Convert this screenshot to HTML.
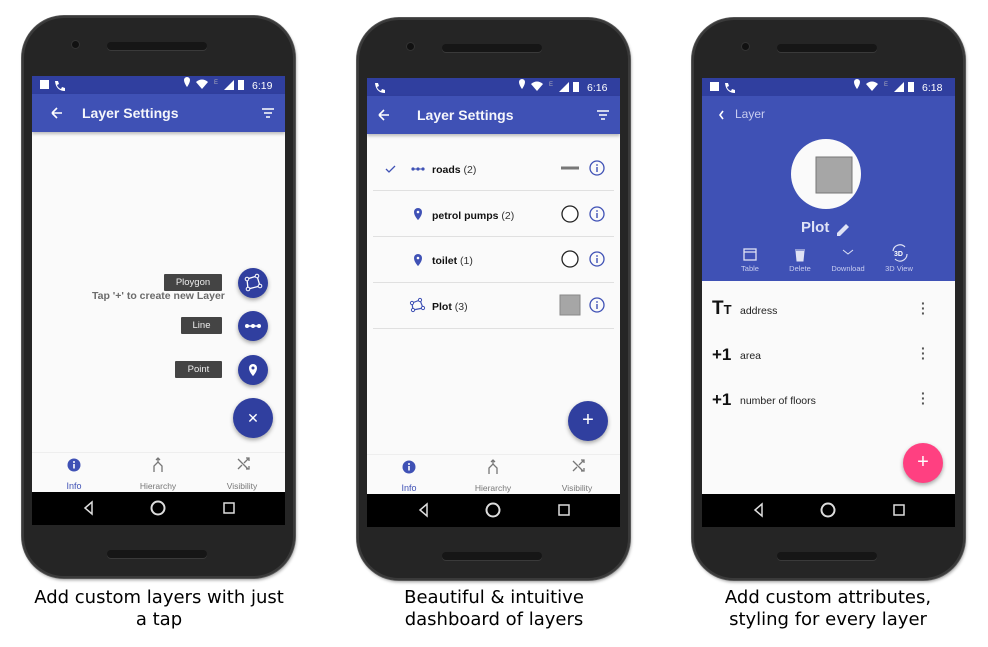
<!DOCTYPE html>
<html><head><meta charset="utf-8">
<style>
*{box-sizing:border-box;margin:0;padding:0}
body{width:988px;height:647px;background:#fff;position:relative;overflow:hidden;font-family:"Liberation Sans",sans-serif}
.phone{position:absolute;width:273px;height:562px;border-radius:42px;background:#252525;box-shadow:0 0 0 1px #555, inset 0 0 0 2px #3a3a3a, 1px 2px 3px rgba(0,0,0,.4)}
.spk{position:absolute;left:85px;width:100px;height:8px;border-radius:5px;background:#161616;box-shadow:0 1px 0 #3a3a3a}
.cam{position:absolute;left:50px;top:25px;width:7px;height:7px;border-radius:50%;background:#111;box-shadow:0 0 0 1px #333}
.scr{position:absolute;left:10px;top:60px;width:253px;height:449px;background:#fafafa;overflow:hidden}
.sb{position:absolute;left:0;top:0;width:253px;height:18px;background:#303f9f;color:#fff;font-size:10px}
.ab{position:absolute;left:0;top:18px;width:253px;height:38px;background:#3f51b5;color:#fff;box-shadow:0 2px 3px rgba(0,0,0,.25)}
.ab .t{position:absolute;left:50px;top:11px;font-size:14px;font-weight:bold;opacity:.95}
.nav{position:absolute;left:0;top:416px;width:253px;height:33px;background:#000}
.bn{position:absolute;left:0;top:376px;width:253px;height:40px;background:#fafafa;border-top:1px solid #eee}
.bn div{position:absolute;top:28px;font-size:8.5px;color:#777;width:60px;text-align:center}
.fab{position:absolute;border-radius:50%;background:#303f9f;box-shadow:0 2px 4px rgba(0,0,0,.35);color:#fff;text-align:center}
.lbl{position:absolute;background:#444;color:#eee;font-size:9.5px;height:17px;line-height:17px;text-align:center;border-radius:1px}
.row{position:absolute;left:0;width:253px;height:46px}
.row .n{position:absolute;left:65px;top:2px;line-height:46px;font-size:10.5px;font-weight:bold;color:#111}
.row .n span{font-weight:normal;color:#333}
.div{position:absolute;left:6px;width:241px;height:1px;background:#e0e0e0}
.cap{position:absolute;width:330px;text-align:center;font-family:"DejaVu Sans",sans-serif;font-size:18px;line-height:22px;color:#000;top:587px}
.ai div{position:absolute;top:186px;font-size:7.5px;color:#c8cdf0;width:50px;text-align:center}
.attr{position:absolute;left:0;width:253px}
.attr .ic{position:absolute;left:10px;font-size:17px;font-weight:bold;color:#111}
.attr .tx{position:absolute;left:38px;top:5px;font-size:10.5px;color:#222}
.attr .dt{position:absolute;left:219px;top:1px;font-size:14px;color:#555;font-weight:bold;line-height:5px;width:3px}
</style></head><body>

<!-- PHONE 1 -->
<div class="phone" style="left:22px;top:16px">
 <div class="cam"></div><div class="spk" style="top:26px"></div><div class="spk" style="top:534px"></div>
 <div class="scr">
  <div class="sb">
   <svg width="253" height="18" style="position:absolute;left:0;top:0">
    <rect x="8" y="4" width="9" height="9" fill="#fff"/><path d="M23 5l3 0 1 3-2 1q1 3 4 4l1-2 3 1v3q-9 0-10-10z" fill="#fff"/>
    <path d="M152 4a3 3 0 0 1 6 0c0 3-3 7-3 7s-3-4-3-7z" fill="#fff"/><path d="M164 6q6-5 12 0l-6 7z" fill="#fff"/>
    <text x="182" y="8" font-size="6" fill="#aab">E</text><path d="M192 14l10-10v10z" fill="#fff"/><rect x="206" y="4" width="6" height="10" fill="#fff"/>
    <text x="220" y="13" font-size="10.5" fill="#fff" font-family="Liberation Sans">6:19</text>
   </svg>
  </div>
  <div class="ab"><svg width="253" height="38" style="position:absolute"><path d="M20 19h10M20 19l5-5M20 19l5 5" stroke="#fff" stroke-width="1.6" fill="none"/><path d="M230 15h12M232 19h8M234 23h4" stroke="#fff" stroke-width="1.5"/></svg><div class="t">Layer Settings</div></div>
  <div style="position:absolute;left:60px;top:214px;font-size:10.5px;font-weight:bold;color:#6b6b6b">Tap '+' to create new Layer</div>
  <div class="lbl" style="left:132px;top:198px;width:58px">Ploygon</div>
  <div class="lbl" style="left:149px;top:241px;width:41px">Line</div>
  <div class="lbl" style="left:143px;top:285px;width:47px">Point</div>
  <div class="fab" style="left:206px;top:192px;width:30px;height:30px"><svg width="30" height="30"><path d="M9 11l10-3 3 10-12 3z" stroke="#fff" stroke-width="1.3" fill="none"/><circle cx="9" cy="11" r="1.8" fill="#303f9f" stroke="#fff"/><circle cx="19" cy="8" r="1.8" fill="#303f9f" stroke="#fff"/><circle cx="22" cy="18" r="1.8" fill="#303f9f" stroke="#fff"/><circle cx="10" cy="21" r="1.8" fill="#303f9f" stroke="#fff"/></svg></div>
  <div class="fab" style="left:206px;top:235px;width:30px;height:30px"><svg width="30" height="30"><path d="M8 15h14" stroke="#fff" stroke-width="1.5"/><circle cx="9" cy="15" r="2" fill="#fff"/><circle cx="15" cy="15" r="2" fill="#fff"/><circle cx="21" cy="15" r="2" fill="#fff"/></svg></div>
  <div class="fab" style="left:206px;top:279px;width:30px;height:30px"><svg width="30" height="30"><path d="M11 13a4 4 0 0 1 8 0c0 4-4 8-4 8s-4-4-4-8z" fill="#fff"/><circle cx="15" cy="13" r="1.5" fill="#303f9f"/></svg></div>
  <div class="fab" style="left:201px;top:322px;width:40px;height:40px;font-size:14px;line-height:40px">✕</div>
  <div class="bn">
   <svg width="253" height="28" style="position:absolute;left:0;top:0"><circle cx="42" cy="12" r="6.5" fill="#3f51b5"/><rect x="41.2" y="11" width="1.6" height="4.5" fill="#fff"/><circle cx="42" cy="9" r="1" fill="#fff"/>
    <path d="M122 19l0-6 4-4 4 4 0 6M126 9v-4M124 7l2-2 2 2" stroke="#777" stroke-width="1.3" fill="none"/>
    <path d="M206 6l10 10M206 16l4-4M212 10l5-5M214 5h3v3M214 16h3v-3" stroke="#777" stroke-width="1.3" fill="none"/></svg>
   <div style="left:12px;color:#3f51b5;font-size:9px">Info</div><div style="left:96px">Hierarchy</div><div style="left:180px">Visibility</div>
  </div>
  <div class="nav"><svg width="253" height="33"><path d="M60 10l-7 6 7 6z" stroke="#ddd" stroke-width="1.5" fill="none"/><circle cx="126" cy="16" r="6.5" stroke="#ddd" stroke-width="2" fill="none"/><rect x="192" y="11" width="10" height="10" stroke="#ddd" stroke-width="1.5" fill="none"/></svg></div>
 </div>
</div>

<!-- PHONE 2 -->
<div class="phone" style="left:357px;top:18px">
 <div class="cam"></div><div class="spk" style="top:26px"></div><div class="spk" style="top:534px"></div>
 <div class="scr">
  <div class="sb">
   <svg width="253" height="18" style="position:absolute;left:0;top:0">
    <path d="M8 5l3 0 1 3-2 1q1 3 4 4l1-2 3 1v3q-9 0-10-10z" fill="#fff"/>
    <path d="M152 4a3 3 0 0 1 6 0c0 3-3 7-3 7s-3-4-3-7z" fill="#fff"/><path d="M164 6q6-5 12 0l-6 7z" fill="#fff"/>
    <text x="182" y="8" font-size="6" fill="#aab">E</text><path d="M192 14l10-10v10z" fill="#fff"/><rect x="206" y="4" width="6" height="10" fill="#fff"/>
    <text x="220" y="13" font-size="10.5" fill="#fff" font-family="Liberation Sans">6:16</text>
   </svg>
  </div>
  <div class="ab"><svg width="253" height="38" style="position:absolute"><path d="M12 19h10M12 19l5-5M12 19l5 5" stroke="#fff" stroke-width="1.6" fill="none"/><path d="M230 15h12M232 19h8M234 23h4" stroke="#fff" stroke-width="1.5"/></svg><div class="t">Layer Settings</div></div>
  <svg width="253" height="260" style="position:absolute;left:0;top:0">
   <path d="M19 91l3 3 6-6" stroke="#3f51b5" stroke-width="1.3" fill="none"/>
   <circle cx="46" cy="91" r="1.6" fill="#3f51b5"/><circle cx="51" cy="91" r="1.6" fill="#3f51b5"/><circle cx="56" cy="91" r="1.6" fill="#3f51b5"/><path d="M46 91h10" stroke="#3f51b5"/>
   <path d="M47 134a4 4 0 0 1 8 0c0 4-4 8-4 8s-4-4-4-8z" fill="#3f51b5"/><circle cx="51" cy="134" r="1.3" fill="#fff"/>
   <path d="M47 180a4 4 0 0 1 8 0c0 4-4 8-4 8s-4-4-4-8z" fill="#3f51b5"/><circle cx="51" cy="180" r="1.3" fill="#fff"/>
   <path d="M45 225l8-3 3 8-10 2z" stroke="#3f51b5" stroke-width="1.2" fill="none"/><circle cx="45" cy="225" r="1.6" fill="#fff" stroke="#3f51b5"/><circle cx="53" cy="222" r="1.6" fill="#fff" stroke="#3f51b5"/><circle cx="56" cy="230" r="1.6" fill="#fff" stroke="#3f51b5"/><circle cx="46" cy="232" r="1.6" fill="#fff" stroke="#3f51b5"/>
   <path d="M194 90h18" stroke="#777" stroke-width="3"/>
   <circle cx="203" cy="136" r="8" fill="#fff" stroke="#222" stroke-width="1.3"/>
   <circle cx="203" cy="181" r="8" fill="#fff" stroke="#222" stroke-width="1.3"/>
   <rect x="193" y="217" width="20" height="20" fill="#a6a6a6" stroke="#888"/>
   <g stroke="#3f51b5" stroke-width="1.3" fill="none"><circle cx="230" cy="90" r="7"/><circle cx="230" cy="136" r="7"/><circle cx="230" cy="181" r="7"/><circle cx="230" cy="227" r="7"/></g>
   <g fill="#3f51b5"><rect x="229.3" y="89" width="1.4" height="5"/><rect x="229.3" y="135" width="1.4" height="5"/><rect x="229.3" y="180" width="1.4" height="5"/><rect x="229.3" y="226" width="1.4" height="5"/>
   <circle cx="230" cy="87" r=".9"/><circle cx="230" cy="133" r=".9"/><circle cx="230" cy="178" r=".9"/><circle cx="230" cy="224" r=".9"/></g>
  </svg>
  <div class="row" style="top:67px"><div class="n">roads <span>(2)</span></div></div>
  <div class="div" style="top:112px"></div>
  <div class="row" style="top:113px"><div class="n">petrol pumps <span>(2)</span></div></div>
  <div class="div" style="top:158px"></div>
  <div class="row" style="top:158px"><div class="n">toilet <span>(1)</span></div></div>
  <div class="div" style="top:204px"></div>
  <div class="row" style="top:204px"><div class="n">Plot <span>(3)</span></div></div>
  <div class="div" style="top:250px"></div>
  <div class="fab" style="left:201px;top:323px;width:40px;height:40px;font-size:20px;line-height:39px">+</div>
  <div class="bn">
   <svg width="253" height="28" style="position:absolute;left:0;top:0"><circle cx="42" cy="12" r="6.5" fill="#3f51b5"/><rect x="41.2" y="11" width="1.6" height="4.5" fill="#fff"/><circle cx="42" cy="9" r="1" fill="#fff"/>
    <path d="M122 19l0-6 4-4 4 4 0 6M126 9v-4M124 7l2-2 2 2" stroke="#777" stroke-width="1.3" fill="none"/>
    <path d="M206 6l10 10M206 16l4-4M212 10l5-5M214 5h3v3M214 16h3v-3" stroke="#777" stroke-width="1.3" fill="none"/></svg>
   <div style="left:12px;color:#3f51b5;font-size:9px">Info</div><div style="left:96px">Hierarchy</div><div style="left:180px">Visibility</div>
  </div>
  <div class="nav"><svg width="253" height="33"><path d="M60 10l-7 6 7 6z" stroke="#ddd" stroke-width="1.5" fill="none"/><circle cx="126" cy="16" r="6.5" stroke="#ddd" stroke-width="2" fill="none"/><rect x="192" y="11" width="10" height="10" stroke="#ddd" stroke-width="1.5" fill="none"/></svg></div>
 </div>
</div>

<!-- PHONE 3 -->
<div class="phone" style="left:692px;top:18px">
 <div class="cam"></div><div class="spk" style="top:26px"></div><div class="spk" style="top:534px"></div>
 <div class="scr">
  <div style="position:absolute;left:0;top:0;width:253px;height:203px;background:#3f51b5"></div>
  <div class="sb">
   <svg width="253" height="18" style="position:absolute;left:0;top:0">
    <rect x="8" y="4" width="9" height="9" fill="#fff"/><path d="M23 5l3 0 1 3-2 1q1 3 4 4l1-2 3 1v3q-9 0-10-10z" fill="#fff"/>
    <path d="M152 4a3 3 0 0 1 6 0c0 3-3 7-3 7s-3-4-3-7z" fill="#fff"/><path d="M164 6q6-5 12 0l-6 7z" fill="#fff"/>
    <text x="182" y="8" font-size="6" fill="#aab">E</text><path d="M192 14l10-10v10z" fill="#fff"/><rect x="206" y="4" width="6" height="10" fill="#fff"/>
    <text x="220" y="13" font-size="10.5" fill="#fff" font-family="Liberation Sans">6:18</text>
   </svg>
  </div>
  <svg width="253" height="203" style="position:absolute;left:0;top:0">
   <path d="M21 33l-3 4 3 4" stroke="#fff" stroke-width="1.6" fill="none"/>
   <circle cx="124" cy="96" r="35" fill="#fafafa"/>
   <rect x="114" y="79" width="36" height="36" fill="#a6a6a6" stroke="#777"/>
   <path d="M135 155l9-9 3 3-9 9h-3z" fill="#dfe2f5"/>
   <g stroke="#dfe2f5" stroke-width="1.3" fill="none"><rect x="42" y="171" width="12" height="11"/><path d="M42 174h12"/></g>
   <path d="M93 172h10M94 173l1 10h6l1-10" fill="#dfe2f5" stroke="#dfe2f5"/>
   <path d="M141 172l5 4 5-4" stroke="#dfe2f5" fill="none"/>
   <path d="M191 173a7 7 0 0 1 12-4M205 176a7 7 0 0 1-12 5" stroke="#dfe2f5" stroke-width="1.2" fill="none"/>
   <text x="192" y="178" font-size="7" fill="#fff" font-weight="bold" font-family="Liberation Sans">3D</text>
  </svg>
  <div style="position:absolute;left:33px;top:29px;font-size:12px;color:#c8cdf0">Layer</div>
  <div style="position:absolute;left:99px;top:141px;font-size:15px;font-weight:bold;color:#e0e3f6">Plot</div>
  <div class="ai"><div style="left:23px">Table</div><div style="left:73px">Delete</div><div style="left:121px">Download</div><div style="left:172px">3D View</div></div>
  <div class="attr" style="top:222px"><div class="ic" style="font-size:19px;top:-2px">T<span style="font-size:13px">T</span></div><div class="tx">address</div><div class="dt">·<br>·<br>·</div></div>
  <div class="attr" style="top:267px"><div class="ic">+1</div><div class="tx">area</div><div class="dt">·<br>·<br>·</div></div>
  <div class="attr" style="top:312px"><div class="ic">+1</div><div class="tx">number of floors</div><div class="dt">·<br>·<br>·</div></div>
  <div class="fab" style="left:201px;top:365px;width:40px;height:40px;font-size:20px;line-height:39px;background:#ff4081">+</div>
  <div class="nav"><svg width="253" height="33"><path d="M60 10l-7 6 7 6z" stroke="#ddd" stroke-width="1.5" fill="none"/><circle cx="126" cy="16" r="6.5" stroke="#ddd" stroke-width="2" fill="none"/><rect x="192" y="11" width="10" height="10" stroke="#ddd" stroke-width="1.5" fill="none"/></svg></div>
 </div>
</div>

<div class="cap" style="left:-6px">Add custom layers with just<br>a tap</div>
<div class="cap" style="left:329px">Beautiful &amp; intuitive<br>dashboard of layers</div>
<div class="cap" style="left:663px">Add custom attributes,<br>styling for every layer</div>
</body></html>
